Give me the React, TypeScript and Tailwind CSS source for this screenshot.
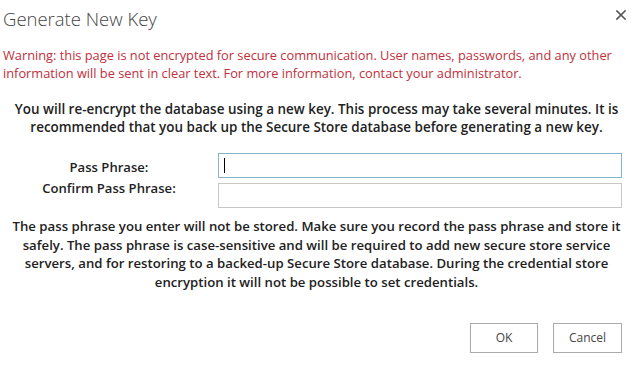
import React from 'react'

const CloseIcon = () => (
  <svg width="10" height="10" viewBox="0 0 10 10" className="block">
    <path d="M1 1 L9 9 M9 1 L1 9" stroke="#555555" strokeWidth="1.6" strokeLinecap="square" />
  </svg>
)

const App = () => {
  return (
    <div className="w-[633px] h-[365px] bg-white overflow-hidden font-['Open_Sans',sans-serif] text-[#222222]">
      {/* header */}
      <div className="flex justify-between items-start pl-[3px] pr-[7px] pt-[7px]">
        <h1 className="text-[18.5px] leading-[24px] font-light text-[#444444]">Generate New Key</h1>
        <div className="pt-[3px]">
          <CloseIcon />
        </div>
      </div>

      {/* warning */}
      <p className="mt-[15px] pl-[3px] text-[12.8px] leading-[18px] text-[#c0303c] whitespace-nowrap">
        Warning: this page is not encrypted for secure communication. User names, passwords, and any other
        <br />
        information will be sent in clear text. For more information, contact your administrator.
      </p>

      <p className="mt-[18px] text-center text-[13.45px] leading-[18px] font-semibold whitespace-nowrap">
        You will re-encrypt the database using a new key. This process may take several minutes. It is
        <br />
        recommended that you back up the Secure Store database before generating a new key.
      </p>

      {/* form */}
      <div className="mt-[17px] flex">
        <div className="w-[218px] pt-[4px] flex flex-col items-center text-[13.1px] leading-[21px] font-semibold">
          <label>Pass Phrase:</label>
          <label>Confirm Pass Phrase:</label>
        </div>
        <div className="w-[404px] flex flex-col gap-[5px]">
          <div className="h-[25px] border border-[#86b4ca] bg-white flex items-center pl-[5px]">
            <div className="w-px h-[15px] bg-black" />
          </div>
          <div className="h-[25px] border border-[#c6c6c6] bg-white" />
        </div>
      </div>

      <p className="mt-[9px] text-center text-[13.2px] leading-[18.5px] font-semibold whitespace-nowrap">
        The pass phrase you enter will not be stored. Make sure you record the pass phrase and store it
        <br />
        safely. The pass phrase is case-sensitive and will be required to add new secure store service
        <br />
        servers, and for restoring to a backed-up Secure Store database. During the credential store
        <br />
        encryption it will not be possible to set credentials.
      </p>

      {/* buttons */}
      <div className="mt-[32px] flex justify-end gap-[15px] pr-[11px]">
        <button className="w-[68px] h-[30px] border border-[#ababab] bg-white text-[12px] text-[#444444]">OK</button>
        <button className="w-[69px] h-[30px] border border-[#ababab] bg-white text-[12px] text-[#444444]">Cancel</button>
      </div>
    </div>
  )
}

export default App
